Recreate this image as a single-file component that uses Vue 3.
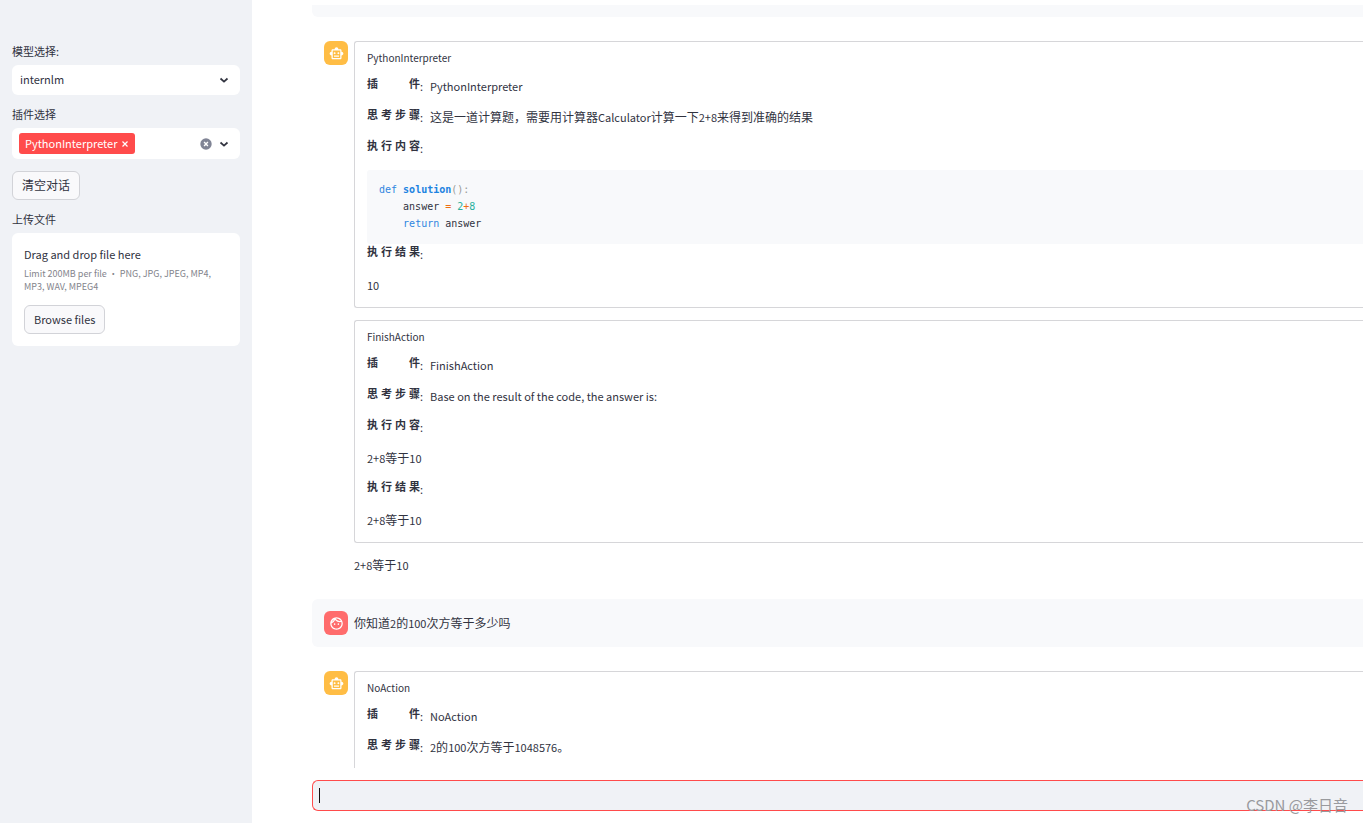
<script setup>
import { ref, onMounted } from 'vue'

const model = ref('internlm')
const prompt = ref('')
const promptBox = ref(null)

// Splits mixed text into runs so Chinese and Latin text can have their own size.
const runs = (text) =>
  text
    .split(/([\u3000-\u9fff\uff00-\uffef]+)/)
    .filter(Boolean)
    .map((value) => ({ value, zh: /[\u3000-\u9fff\uff00-\uffef]/.test(value) }))

const firstReply = [
  {
    title: 'PythonInterpreter',
    rows: [
      { label: '插件', value: 'PythonInterpreter' },
      { label: '思考步骤', value: '这是一道计算题，需要用计算器Calculator计算一下2+8来得到准确的结果' },
      { label: '执行内容', code: true },
      { label: '执行结果', after: '10' },
    ],
  },
  {
    title: 'FinishAction',
    rows: [
      { label: '插件', value: 'FinishAction' },
      { label: '思考步骤', value: 'Base on the result of the code, the answer is:' },
      { label: '执行内容', after: '2+8等于10' },
      { label: '执行结果', after: '2+8等于10' },
    ],
  },
]

const secondReply = [
  {
    title: 'NoAction',
    open: true,
    rows: [
      { label: '插件', value: 'NoAction' },
      { label: '思考步骤', value: '2的100次方等于1048576。' },
    ],
  },
]

const messages = [
  { role: 'bot', cards: firstReply, text: '2+8等于10' },
  { role: 'user', cards: [], text: '你知道2的100次方等于多少吗' },
  { role: 'bot', cards: secondReply, text: '' },
]

onMounted(() => promptBox.value.focus())
</script>

<template>
  <div class="app">
    <aside class="sidebar">
      <label class="label" for="model">模型选择:</label>
      <div class="select-box">
        <select id="model" v-model="model" class="select">
          <option>internlm</option>
        </select>
        <svg class="chevron" viewBox="0 0 12 12"><path d="M2.5 4.5 6 7.7 9.5 4.5" /></svg>
      </div>

      <span id="plugins" class="label">插件选择</span>
      <div class="multi" role="group" aria-labelledby="plugins">
        <span class="tag">
          <span class="tag-text">PythonInterpreter</span>
          <button class="plain" aria-label="Remove">
            <svg class="cross" viewBox="0 0 8 8"><path d="M1.5 1.5l5 5M6.5 1.5l-5 5" /></svg>
          </button>
        </span>
        <button class="plain clear" aria-label="Clear all">
          <svg class="clear-icon" viewBox="0 0 12 12">
            <circle cx="6" cy="6" r="5.7" />
            <path d="M4.1 4.1l3.8 3.8M7.9 4.1L4.1 7.9" />
          </svg>
        </button>
        <button class="plain" aria-label="Open">
          <svg class="chevron" viewBox="0 0 12 12"><path d="M2.5 4.5 6 7.7 9.5 4.5" /></svg>
        </button>
      </div>

      <button class="button wipe">清空对话</button>

      <span id="upload" class="label">上传文件</span>
      <section class="uploader" aria-labelledby="upload">
        <span class="drop">Drag and drop file here</span>
        <small class="limit">Limit 200MB per file • PNG, JPG, JPEG, MP4, MP3, WAV, MPEG4</small>
        <button class="button browse">Browse files</button>
      </section>
    </aside>

    <main class="main">
      <div class="feed">
        <div class="previous"></div>
        <article v-for="(m, i) in messages" :key="i" class="message" :class="m.role">
          <div class="avatar">
            <svg v-if="m.role === 'bot'" viewBox="0 0 24 24">
              <path d="M20 9V7c0-1.1-.9-2-2-2h-3c0-1.66-1.34-3-3-3S9 3.34 9 5H6c-1.1 0-2 .9-2 2v2c-1.66 0-3 1.34-3 3s1.34 3 3 3v4c0 1.1.9 2 2 2h12c1.1 0 2-.9 2-2v-4c1.66 0 3-1.34 3-3s-1.34-3-3-3zm-2 10H6V7h12v12zm-9-6c-.83 0-1.5-.67-1.5-1.5S8.17 10 9 10s1.5.67 1.5 1.5S9.83 13 9 13zm7.5-1.5c0 .83-.67 1.5-1.5 1.5s-1.5-.67-1.5-1.5.67-1.5 1.5-1.5 1.5.67 1.5 1.5zM8 15h8v2H8v-2z" />
            </svg>
            <svg v-else viewBox="0 0 24 24">
              <path d="M10.25 13a1.25 1.25 0 11-2.5 0 1.25 1.25 0 012.5 0zM15 11.75a1.25 1.25 0 100 2.5 1.25 1.25 0 000-2.5zm7 .25c0 5.52-4.48 10-10 10S2 17.52 2 12 6.48 2 12 2s10 4.48 10 10zM10.66 4.12C12.06 6.44 14.6 8 17.5 8c.46 0 .91-.05 1.34-.12C17.44 5.56 14.9 4 12 4c-.46 0-.91.05-1.34.12zM4.42 9.47a8.046 8.046 0 003.66-4.44 8.046 8.046 0 00-3.66 4.44zM20 12c0-.78-.12-1.53-.33-2.24-.7.15-1.42.24-2.17.24a10 10 0 01-7.76-3.69A10.016 10.016 0 014 11.86c.01.04 0 .09 0 .14 0 4.41 3.59 8 8 8s8-3.59 8-8z" />
            </svg>
          </div>
          <div class="body">
            <section v-for="card in m.cards" :key="card.title" class="card" :class="{ open: card.open }">
              <h2 class="title">{{ card.title }}</h2>
              <template v-for="row in card.rows" :key="row.label">
                <div class="row">
                  <b class="key">{{ row.label }}</b><span class="colon">:</span>
                  <span v-if="row.value" class="value"><span v-for="(r, k) in runs(row.value)" :key="k" :class="{ zh: r.zh }">{{ r.value }}</span></span>
                </div>
                <pre v-if="row.code" class="code"><code><span class="kw">def</span> <span class="fn">solution</span><span class="pn">():</span>
    answer <span class="op">=</span> <span class="num">2</span><span class="op">+</span><span class="num">8</span>
    <span class="kw">return</span> answer</code></pre>
                <p v-if="row.after" class="line"><span v-for="(r, k) in runs(row.after)" :key="k" :class="{ zh: r.zh }">{{ r.value }}</span></p>
              </template>
            </section>
            <p v-if="m.text" class="line"><span v-for="(r, k) in runs(m.text)" :key="k" :class="{ zh: r.zh }">{{ r.value }}</span></p>
          </div>
        </article>
      </div>
      <div class="prompt-box">
        <input ref="promptBox" v-model="prompt" class="prompt" type="text" aria-label="Message" />
        <span v-if="!prompt" class="caret"></span>
      </div>
      <span class="watermark">CSDN @李日音</span>
    </main>
  </div>
</template>

<style>
body {
  margin: 0;
  background: #fff;
}
</style>

<style scoped>
.app,
.app * {
  box-sizing: border-box;
}
.app {
  display: flex;
  height: 100vh;
  overflow: hidden;
  color: #31333f;
  font: 11px/18px "Noto Sans CJK SC", sans-serif;
}
.zh {
  font-size: 12px;
}
.sidebar {
  flex: 0 0 252px;
  display: flex;
  flex-direction: column;
  align-items: stretch;
  padding: 42px 12px 12px;
  background: #f0f2f6;
}
.label {
  margin-bottom: 5px;
  line-height: 18px;
}
.select-box {
  position: relative;
  display: flex;
  margin-bottom: 10px;
}
.select {
  flex: 1;
  height: 30px;
  padding: 0 8px 2px;
  border: 0;
  border-radius: 6px;
  background: #fff;
  color: inherit;
  font: inherit;
  appearance: none;
  outline: 0;
}
.select-box .chevron {
  position: absolute;
  right: 10px;
  top: 9px;
  pointer-events: none;
}
.chevron {
  display: block;
  width: 12px;
  height: 12px;
  fill: none;
  stroke: #31333f;
  stroke-width: 1.7;
}
.multi {
  display: flex;
  align-items: center;
  height: 31px;
  margin-bottom: 12px;
  padding: 0 10px 0 7px;
  border-radius: 6px;
  background: #fff;
}
.tag {
  display: flex;
  align-items: center;
  gap: 4px;
  height: 21px;
  padding: 0 6px;
  border-radius: 3px;
  background: #ff4b4b;
  color: #fff;
}
.tag-text {
  padding-bottom: 2px;
}
.plain {
  padding: 0;
  border: 0;
  background: none;
}
.clear {
  margin: 0 6px 0 auto;
}
.cross {
  display: block;
  width: 8px;
  height: 8px;
  stroke: #fff;
  stroke-width: 1.2;
}
.clear-icon {
  display: block;
  width: 12px;
  height: 12px;
  fill: #808495;
}
.clear-icon path {
  stroke: #fff;
  stroke-width: 1.4;
}
.button {
  align-self: flex-start;
  height: 29px;
  padding: 0 9px 2px;
  border: 1px solid #d2d3d8;
  border-radius: 6px;
  background: #f9f9fb;
  color: inherit;
  font: inherit;
}
.button.wipe {
  margin-bottom: 10px;
  font-size: 12px;
}
.button.browse {
  padding-right: 8px;
}
.uploader {
  display: flex;
  flex-direction: column;
  padding: 12px;
  border-radius: 6px;
  background: #fff;
}
.limit {
  margin: 4px 0 12px;
  color: #83848c;
  font-size: 9px;
  line-height: 13px;
}
.main {
  position: relative;
  flex: 1;
  min-width: 0;
  display: flex;
  flex-direction: column;
  padding: 5px 0 12px 60px;
}
.feed {
  flex: 1;
  min-height: 0;
  display: flex;
  flex-direction: column;
  gap: 12px;
  margin-bottom: 12px;
  overflow: hidden;
}
.previous {
  flex: none;
  height: 12px;
  border-radius: 0 0 0 6px;
  background: #f8f9fb;
}
.message {
  flex: none;
  display: flex;
  gap: 6px;
  padding: 12px 0 12px 12px;
  border-radius: 6px 0 0 6px;
}
.user {
  background: #f8f9fb;
}
.avatar {
  flex: none;
  display: flex;
  align-items: center;
  justify-content: center;
  width: 24px;
  height: 24px;
  border-radius: 6px;
  background: #ffbd45;
}
.user .avatar {
  background: #ff6c6c;
}
.avatar svg {
  width: 15px;
  height: 15px;
  fill: #fff;
}
.body {
  flex: 1;
  min-width: 0;
  display: flex;
  flex-direction: column;
  gap: 12px;
}
.bot .body > .line {
  padding: 1px 0;
}
.user .body {
  justify-content: center;
}
.card {
  display: flex;
  flex-direction: column;
  padding: 8px 0 13px 12px;
  border: 1px solid #d6d6d9;
  border-right: 0;
  border-radius: 3px 0 0 3px;
}
.card.open {
  min-height: 240px;
}
.title {
  margin: 0 0 11px;
  font-size: 10px;
  font-weight: 400;
  line-height: 16px;
}
.row {
  display: flex;
  height: 18px;
  margin-bottom: 13px;
}
.key {
  width: 53px;
  line-height: 13px;
  text-align: justify;
  text-align-last: justify;
}
.colon {
  width: 10px;
}
.line {
  margin: 0;
  line-height: 18px;
}
.line + .row {
  margin-top: 13px;
}
.code {
  margin: 0 0 1px;
  padding: 11px 12px 12px;
  border-radius: 3px 0 0 3px;
  background: #f8f9fb;
  font: 10px/17px "DejaVu Sans Mono", monospace;
}
.code code {
  font: inherit;
}
.kw {
  color: #2f86e0;
}
.fn {
  color: #1c83e1;
  font-weight: 700;
}
.pn {
  color: #999;
}
.op {
  color: #ed6f13;
}
.num {
  color: #29b09d;
}
.prompt-box {
  position: relative;
  flex: none;
  display: flex;
}
.prompt {
  flex: 1;
  height: 31px;
  padding: 0 6px;
  border: 1px solid #ff4b4b;
  border-right: 0;
  border-radius: 6px 0 0 6px;
  outline: 0;
  background: #f0f2f6;
  color: inherit;
  font: inherit;
  caret-color: transparent;
}
.caret {
  position: absolute;
  left: 7px;
  top: 8px;
  width: 1px;
  height: 15px;
  background: #111;
}
.watermark {
  position: absolute;
  right: 15px;
  bottom: 8px;
  color: #999a9e;
  font-size: 15px;
  line-height: 20px;
  pointer-events: none;
}
</style>
